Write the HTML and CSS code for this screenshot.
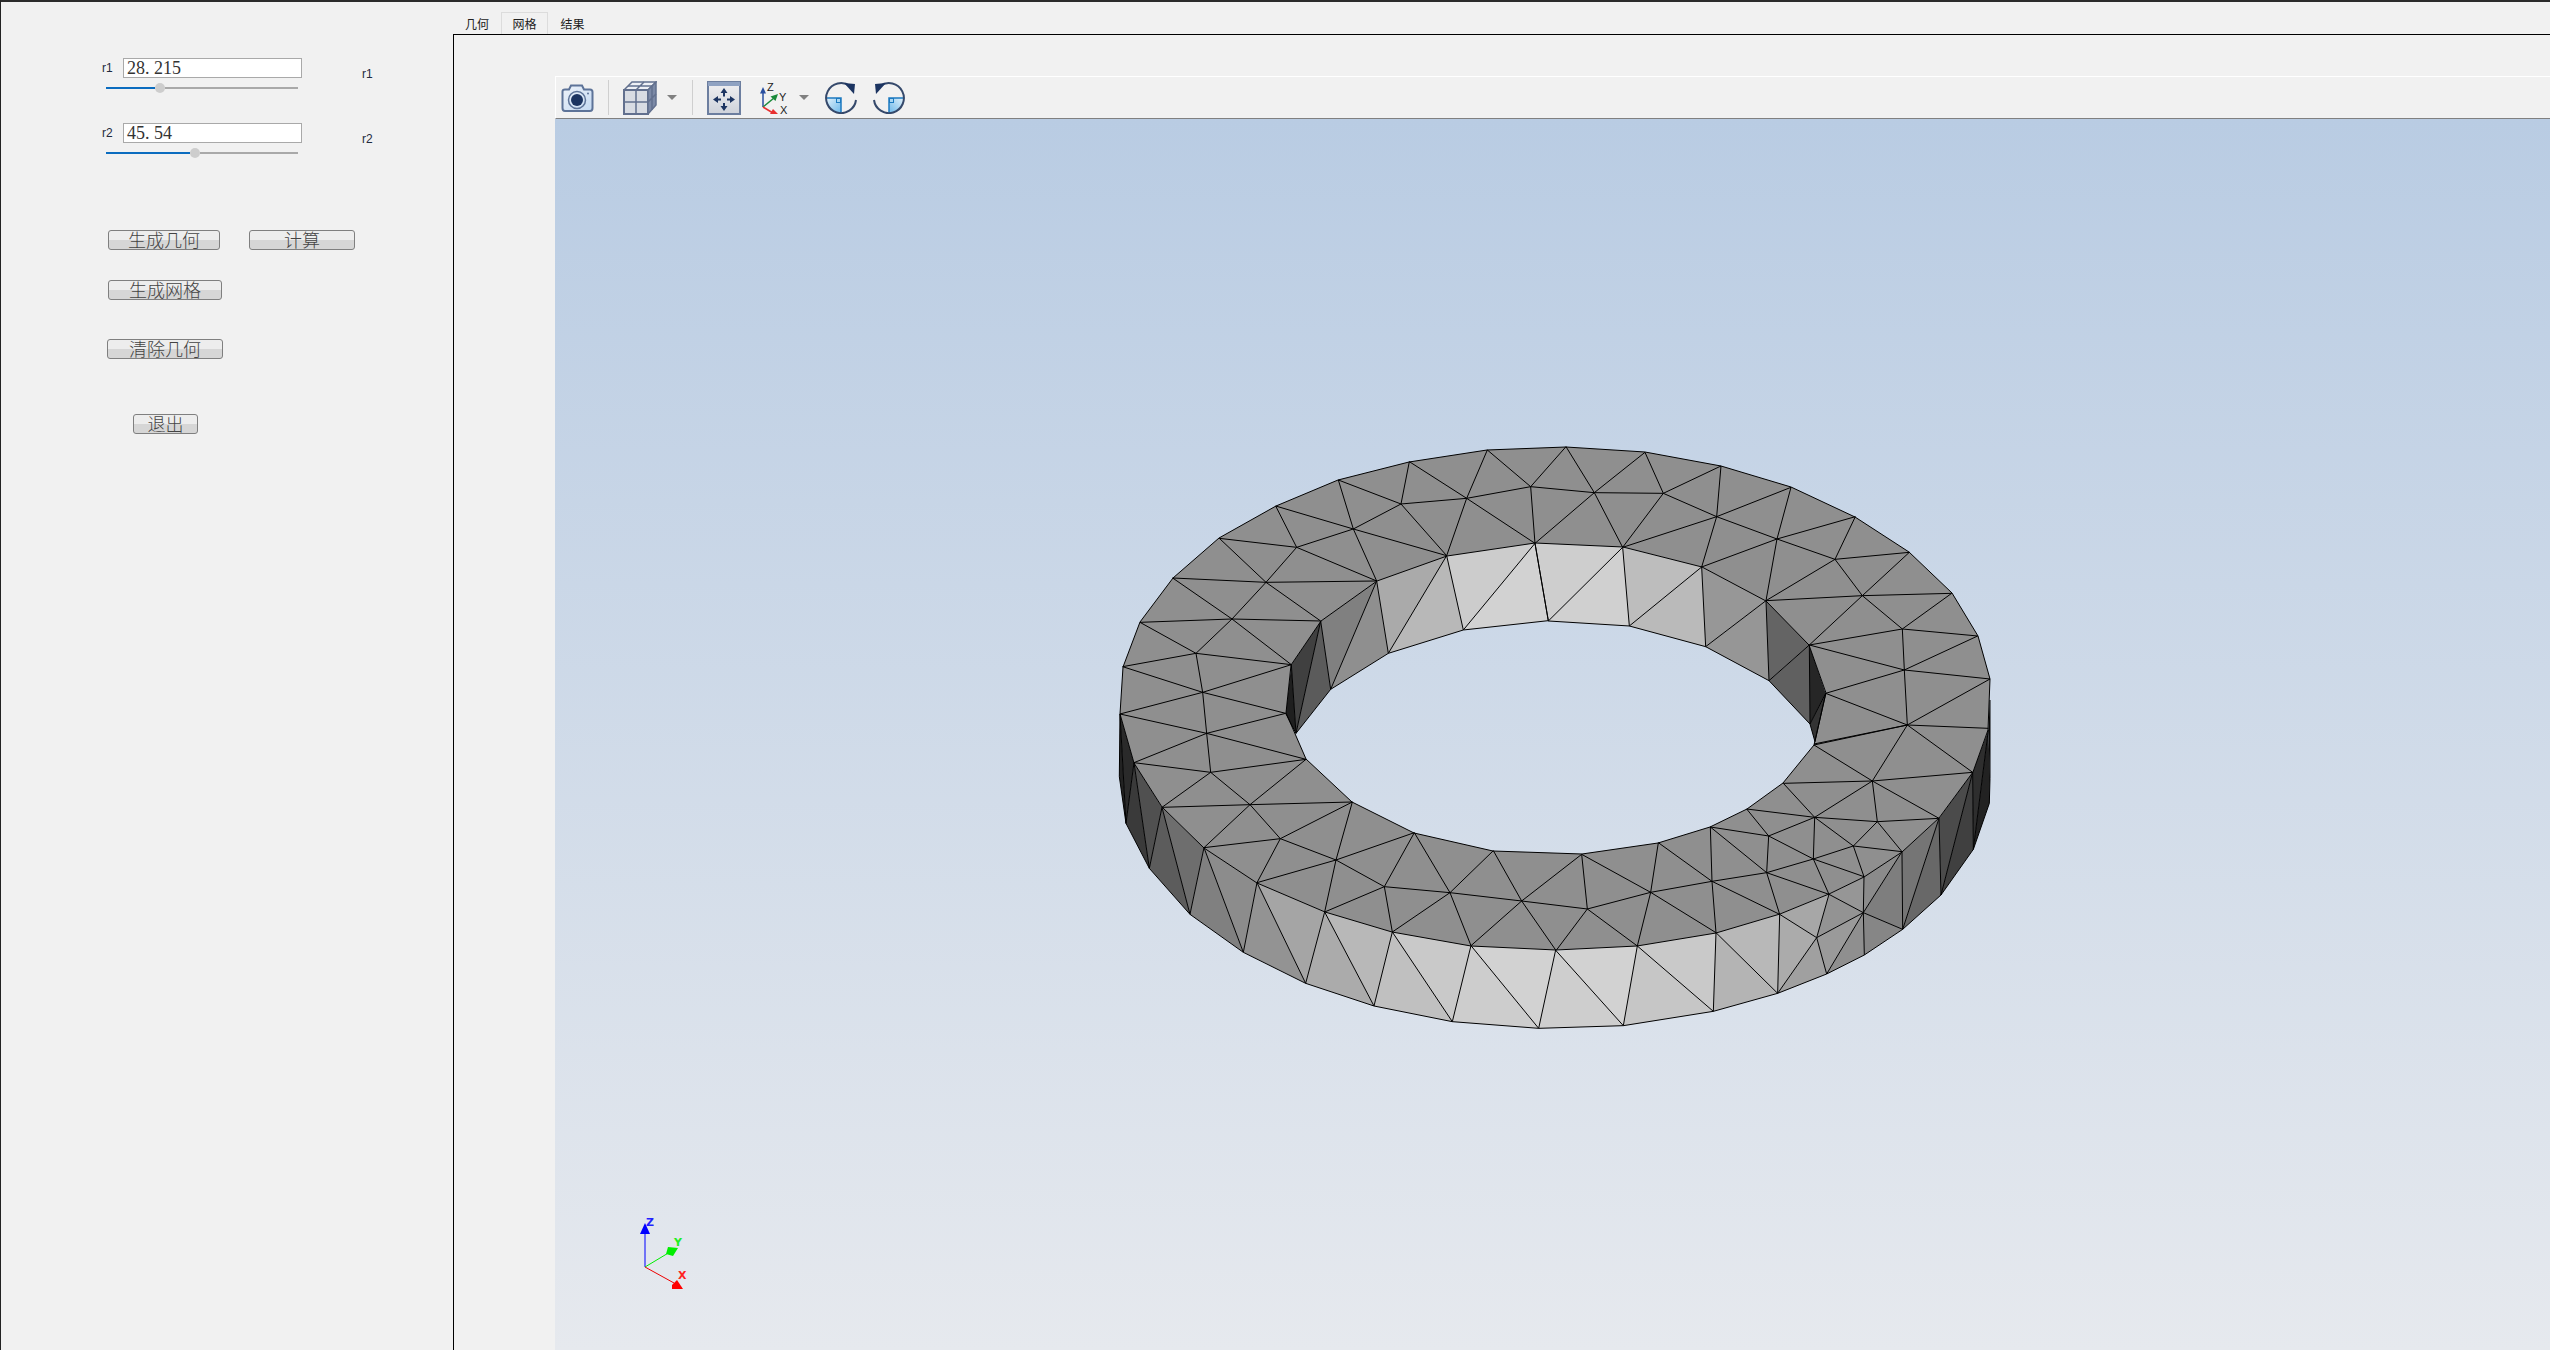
FILE: index.html
```html
<!DOCTYPE html>
<html lang="zh">
<head>
<meta charset="utf-8">
<title>几何 网格 结果</title>
<link rel="stylesheet" href="styles.css">
</head>
<body>
<div class="app">
  <aside class="panel">
    <div class="param">
      <span class="lbl">r1</span>
      <div class="num">28<span class="dot">.</span>215</div>
      <span class="lbl lbl-right">r1</span>
      <div class="slider"><i class="fill" style="width:49px"></i><i class="thumb"></i><i class="rest"></i></div>
    </div>
    <div class="param">
      <span class="lbl">r2</span>
      <div class="num">45<span class="dot">.</span>54</div>
      <span class="lbl lbl-right">r2</span>
      <div class="slider"><i class="fill" style="width:84px"></i><i class="thumb"></i><i class="rest"></i></div>
    </div>
    <div class="row row-a">
      <button class="btn b-geo">生成几何</button>
      <button class="btn b-calc">计算</button>
    </div>
    <div class="row row-b"><button class="btn b-mesh">生成网格</button></div>
    <div class="row row-c"><button class="btn b-clear">清除几何</button></div>
    <div class="row row-d"><button class="btn b-exit">退出</button></div>
  </aside>
  <main class="main">
    <nav class="tabs">
      <span class="tab">几何</span>
      <span class="tab active">网格</span>
      <span class="tab">结果</span>
    </nav>
    <section class="pane">
      <div class="toolbar">
        <svg class="ic ic-cam" viewBox="0 0 34 28">
          <defs>
            <linearGradient id="gCam" x1="0" y1="0" x2="1" y2="1"><stop offset="0" stop-color="#eef3fa"/><stop offset="1" stop-color="#c4d9f2"/></linearGradient>
            <linearGradient id="gFit" x1="0" y1="0" x2="0" y2="1"><stop offset="0" stop-color="#f0f0f2"/><stop offset="1" stop-color="#ced2da"/></linearGradient>
            <linearGradient id="gQ" x1="0" y1="0" x2="1" y2="1"><stop offset="0" stop-color="#e4f2fb"/><stop offset="1" stop-color="#6cb8ea"/></linearGradient>
          </defs>
          <path class="cam-body" d="M2.5 7.5Q2.5 5.5 5 5.5L9 5.5L11 1.5L22 1.5L24 5.5L30 5.5Q32.5 5.5 32.5 8L32.5 24Q32.5 27 30 27L5 27Q2.500 27 2.500 24Z"/>
          <circle class="cam-ring" cx="17" cy="16" r="8.500"/>
          <circle class="navy" cx="17" cy="16" r="6"/>
          <circle class="cam-dot" cx="28" cy="9.500" r="1"/>
        </svg>
        <i class="sep s1"></i>
        <svg class="ic ic-cube" viewBox="0 0 34 34">
          <path class="cube-top" d="M1 9L9 1L33 1L25 9Z"/>
          <path class="cube-front" d="M1 9L25 9L25 33L1 33Z"/>
          <path class="cube-side" d="M25 9L33 1L33 24L25 33Z"/>
          <path class="cube-line" d="M13 9L13 33M1 21L25 21M5 5L29 5M21 1L13 9M29 5L29 29M25 21L33 13"/>
        </svg>
        <i class="caret c1"></i>
        <i class="sep s2"></i>
        <svg class="ic ic-fit" viewBox="0 0 34 34">
          <rect class="fit-box" x="1" y="1" width="32" height="32"/>
          <rect class="fit-bar" x="1" y="1" width="32" height="4"/>
          <path class="fit-arrow" d="M17 10L17 15.500M17 22L17 27M9 18.500L14 18.500M20 18.500L25 18.500"/>
          <path class="navy" d="M17 7L20.500 12L13.500 12ZM17 30L13.500 25L20.500 25ZM6 18.500L11 15L11 22ZM28 18.500L23 22L23 15Z"/>
        </svg>
        <svg class="ic ic-axes" viewBox="0 -2 30 38">
          <path class="ax ax-z" d="M3 26L3 12"/><path class="head-z" d="M3 6L6 12.500L0 12.500Z"/>
          <path class="ax ax-y" d="M3 26L14 17"/><path class="head-y" d="M18 13L15.500 20L10.500 15.500Z"/>
          <path class="ax ax-x" d="M3 26L13 32"/><path class="head-x" d="M18 33L10 33L13 28Z"/>
          <text class="ax-t" x="7" y="10">Z</text><text class="ax-t" x="19" y="20">Y</text><text class="ax-t" x="20" y="33">X</text>
        </svg>
        <i class="caret c2"></i>
        <svg class="ic ic-rot r1" viewBox="0 0 32 32">
          <path class="quarter" d="M1 16L16 16L16 31A15 15 0 0 1 1 16Z"/>
          <rect class="q-box" x="11.500" y="16.500" width="4" height="4"/>
          <path class="q-line" d="M1 16L16 16L16 31"/>
          <path class="rot-arc" d="M31 18A15 15 0 1 1 25 4"/>
          <path class="navy" d="M19 1L30 2L29 12Z"/>
        </svg>
        <svg class="ic ic-rot r2" viewBox="0 0 32 32">
          <path class="quarter" d="M1 16L16 16L16 31A15 15 0 0 1 1 16Z"/>
          <rect class="q-box" x="11.500" y="16.500" width="4" height="4"/>
          <path class="q-line" d="M1 16L16 16L16 31"/>
          <path class="rot-arc" d="M31 18A15 15 0 1 1 25 4"/>
          <path class="navy" d="M19 1L30 2L29 12Z"/>
        </svg>
      </div>
      <div class="view">
        <svg class="scene" viewBox="555 119 1995 1231">
          <g transform="translate(1100 430) scale(.33333)">
            <polygon fill="#d2d2d2" points="1305,340 1345,572 1090,600"/>
            <polygon fill="#cccccc" points="1305,340 1040,377 1090,600"/>
            <polygon fill="#b8b8b8" points="1040,377 865,670 1090,600"/>
            <polygon fill="#aaaaaa" points="1040,377 830,453 865,670"/>
            <polygon fill="#8f8f8f" points="830,453 692,778 865,670"/>
            <polygon fill="#808080" points="830,453 662,573 692,778"/>
            <polygon fill="#5b5b5b" points="662,573 588,910 692,778"/>
            <polygon fill="#404040" points="662,573 574,704 588,910"/>
            <polygon fill="#1f1f1f" points="574,704 557,850 588,910"/>
          </g>
          <g transform="translate(1540 430) scale(.33333)">
            <polygon fill="#cecece" points="-15,340 248,352 25,573"/>
            <polygon fill="#d0d0d0" points="248,352 268,588 25,573"/>
            <polygon fill="#bdbdbd" points="248,352 485,411 268,588"/>
            <polygon fill="#bababa" points="485,411 497,650 268,588"/>
            <polygon fill="#979797" points="485,411 678,512 497,650"/>
            <polygon fill="#969696" points="678,512 687,752 497,650"/>
            <polygon fill="#646464" points="678,512 808,645 687,752"/>
            <polygon fill="#606060" points="808,645 810,882 687,752"/>
            <polygon fill="#262626" points="808,645 857,790 810,882"/>
            <polygon fill="#333333" points="857,790 825,935 810,882"/>
          </g>
          <g transform="translate(1100 720) scale(.33333)">
            <polygon fill="#222222" points="60,-18 78,310 58,170"/>
            <polygon fill="#2a2a2a" points="60,-18 102,128 78,310"/>
            <polygon fill="#3a3a3a" points="102,128 148,445 78,310"/>
            <polygon fill="#505050" points="102,128 186,262 148,445"/>
            <polygon fill="#5c5c5c" points="186,262 270,583 148,445"/>
            <polygon fill="#6e6e6e" points="186,262 312,383 270,583"/>
            <polygon fill="#808080" points="312,383 430,697 270,583"/>
            <polygon fill="#8c8c8c" points="312,383 471,488 430,697"/>
            <polygon fill="#939393" points="471,488 617,790 430,697"/>
            <polygon fill="#a5a5a5" points="471,488 674,576 617,790"/>
            <polygon fill="#ababab" points="674,576 822,858 617,790"/>
            <polygon fill="#b8b8b8" points="674,576 877,636 822,858"/>
            <polygon fill="#c0c0c0" points="877,636 1057,905 822,858"/>
            <polygon fill="#c9c9c9" points="877,636 1113,677 1057,905"/>
            <polygon fill="#cdcdcd" points="1113,677 1316,925 1057,905"/>
            <polygon fill="#d2d2d2" points="1113,677 1367,690 1316,925"/>
          </g>
          <g transform="translate(1540 720) scale(.33333)">
            <polygon fill="#cecece" points="48,692 250,917 -4,925"/>
            <polygon fill="#d2d2d2" points="48,692 292,678 250,917"/>
            <polygon fill="#c6c6c6" points="292,678 520,874 250,917"/>
            <polygon fill="#c9c9c9" points="292,678 528,638 520,874"/>
            <polygon fill="#b4b4b4" points="528,638 713,820 520,874"/>
            <polygon fill="#b8b8b8" points="528,638 719,583 713,820"/>
            <polygon fill="#ababab" points="719,583 830,653 713,820"/>
            <polygon fill="#a7a7a7" points="719,583 867,523 830,653"/>
            <polygon fill="#a0a0a0" points="830,653 860,762 713,820"/>
            <polygon fill="#939393" points="867,523 970,578 830,653"/>
            <polygon fill="#9a9a9a" points="970,578 860,762 830,653"/>
            <polygon fill="#8f8f8f" points="970,578 973,705 860,762"/>
            <polygon fill="#969696" points="867,523 972,470 970,578"/>
            <polygon fill="#8b8b8b" points="972,470 1086,395 970,578"/>
            <polygon fill="#868686" points="970,578 1088,628 973,705"/>
            <polygon fill="#7e7e7e" points="970,578 1086,395 1088,628"/>
            <polygon fill="#757575" points="1086,395 1197,295 1088,628"/>
            <polygon fill="#686868" points="1197,295 1203,525 1088,628"/>
            <polygon fill="#4b4b4b" points="1197,295 1298,157 1203,525"/>
            <polygon fill="#404040" points="1298,157 1300,388 1203,525"/>
            <polygon fill="#2e2e2e" points="1298,157 1345,30 1300,388"/>
            <polygon fill="#222222" points="1345,30 1350,175 1348,250 1300,388"/>
            <polygon fill="#111111" points="1345,30 1350,-60 1350,175"/>
          </g>
          <path class="top-face" fill-rule="evenodd" d="M1566 447L1487 450L1409 462L1338 480L1276 506L1219 538L1173 578L1140 622L1123 667L1120 714L1134 763L1162 807L1204 848L1257 883L1325 912L1392 932L1471 946L1556 950L1637 946L1716 933L1780 914L1829 894L1864 877L1902 852L1939 818L1973 772L1988 730L1990 679L1978 636L1952 593L1909 552L1855 517L1791 487L1721 466L1645 452ZM1535 543L1447 556L1377 581L1321 621L1291 665L1286 713L1306 759L1352 802L1414 833L1493 851L1582 854L1658 843L1710 827L1747 809L1783 783L1814 745L1826 693L1809 645L1766 601L1702 567L1623 547Z"/>
          <g transform="translate(1100 430) scale(.33333)">
            <path class="edge" d="M1162 60L1100 205M1162 60L1292 170M1398 50L1292 170M928 95L903 222M928 95L1100 205M715 150L903 222M715 150L760 297M527 228L760 297M527 228L590 352M358 325L590 352M358 325L498 457M218 444L498 457M218 444L396 567M120 577L396 567M120 577L288 670M68 710L288 670M68 710L308 787M60 852L308 787M60 852L320 910M1292 170L1100 205M1100 205L903 222M1292 170L1305 340M1100 205L1305 340M1100 205L1040 377M903 222L1040 377M903 222L760 297M760 297L1040 377M760 297L830 453M760 297L590 352M590 352L830 453M590 352L498 457M498 457L830 453M498 457L662 573M498 457L396 567M396 567L662 573M396 567L574 704M396 567L288 670M288 670L574 704M288 670L308 787M308 787L574 704M308 787L557 850M308 787L320 910M320 910L557 850"/>
            <path class="edge" d="M1305 340L1090 600M1305 340L1345 572M1040 377L1090 600M1040 377L865 670M830 453L865 670M830 453L692 778M662 573L692 778M662 573L588 910M574 704L588 910M557 850L588 910M1345 572L1090 600L865 670L692 778L588 910"/>
          </g>
          <g transform="translate(1540 430) scale(.33333)">
            <path class="edge" d="M78 50L163 188M315 67L163 188M315 67L370 190M543 108L370 190M543 108L530 260M753 172L530 260M753 172L711 327M946 260L711 327M946 260L885 388M1108 367L885 388M1108 367L967 497M1235 490L967 497M1235 490L1087 597M1313 618L1087 597M1313 618L1093 720M1350 747L1093 720M1350 747L1102 885M1345 895L1102 885M163 188L-28 170M163 188L-15 340M163 188L248 352M163 188L370 190M370 190L248 352M370 190L530 260M530 260L248 352M530 260L485 411M530 260L711 327M711 327L485 411M711 327L678 512M711 327L885 388M885 388L678 512M885 388L967 497M967 497L678 512M967 497L808 645M967 497L1087 597M1087 597L808 645M1087 597L1093 720M1093 720L808 645M1093 720L857 790M1093 720L1102 885M1102 885L857 790M1102 885L822 942"/>
            <path class="edge" d="M-15 340L25 573M248 352L25 573M248 352L268 588M485 411L268 588M485 411L497 650M678 512L497 650M678 512L687 752M808 645L687 752M808 645L810 882M857 790L810 882M857 790L825 935M25 573L268 588L497 650L687 752L810 882L825 935"/>
          </g>
          <g transform="translate(1100 720) scale(.33333)">
            <path class="edge" d="M320 40L618 118M320 40L102 128M320 40L332 157M332 157L102 128M332 157L618 118M332 157L186 262M332 157L450 254M186 262L450 254M450 254L618 118M450 254L757 246M450 254L312 383M450 254L541 356M312 383L541 356M541 356L757 246M541 356L471 488M541 356L708 420M708 420L757 246M708 420L471 488M708 420L674 576M708 420L853 500M708 420L943 338M853 500L943 338M853 500L674 576M853 500L877 636M853 500L1050 518M943 338L1050 518M1050 518L877 636M1050 518L1113 677M1050 518L1180 392M1050 518L1265 543M1180 392L1265 543M1265 543L1113 677M1265 543L1367 690M1265 543L1445 403M1265 543L1462 567"/>
            <path class="edge" d="M102 128L148 445M102 128L78 310M60 -18L78 310M186 262L148 445M186 262L270 583M312 383L270 583M312 383L430 697M471 488L430 697M471 488L617 790M674 576L617 790M674 576L822 858M877 636L822 858M877 636L1057 905M1113 677L1057 905M1113 677L1316 925M1367 690L1316 925M60 -18L58 170L78 310L148 445L270 583L430 697L617 790L822 858L1057 905L1316 925L1570 917"/>
          </g>
          <g transform="translate(1540 720) scale(.33333)">
            <path class="edge" d="M125 403L142 567M125 403L332 517M355 368L332 517M355 368L516 484M142 567L332 517M142 567L48 692M142 567L292 678M332 517L292 678M332 517L528 638M332 517L516 484M516 484L511 321M516 484L528 638M516 484L719 583M516 484L680 458M511 321L680 458M511 321L686 348M620 267L686 348M620 267L824 292M686 348L824 292M686 348L820 417M686 348L680 458M680 458L820 417M680 458L719 583M680 458L867 523M820 417L867 523M820 417L972 470M820 417L940 378M820 417L824 292M824 292L940 378M824 292L730 190M824 292L997 183M824 292L1012 305M940 378L1012 305M940 378L972 470M940 378L1086 395M1012 305L1086 395M1012 305L1197 295M1012 305L997 183M997 183L730 190M997 183L822 75M997 183L1102 15M997 183L1298 157M997 183L1197 295M1102 15L822 75M1102 15L1298 157"/>
            <path class="edge" d="M48 692L250 917M292 678L250 917M292 678L520 874M528 638L520 874M528 638L713 820M719 583L713 820M719 583L830 653M830 653L713 820M830 653L860 762M830 653L867 523M830 653L970 578M867 523L970 578M970 578L860 762M970 578L973 705M970 578L972 470M970 578L1086 395M970 578L1088 628M1086 395L1088 628M1197 295L1088 628M1197 295L1203 525M1298 157L1203 525M1298 157L1300 388M1345 30L1300 388M250 917L520 874L713 820L860 762L973 705L1088 628L1203 525L1300 388L1348 250L1350 175L1350 -60"/>
          </g>
          <path class="edge" d="M1566 447L1487 450L1409 462L1338 480L1276 506L1219 538L1173 578L1140 622L1123 667L1120 714L1134 763L1162 807L1204 848L1257 883L1325 912L1392 932L1471 946L1556 950L1637 946L1716 933L1780 914L1829 894L1864 877L1902 852L1939 818L1973 772L1988 730L1990 679L1978 636L1952 593L1909 552L1855 517L1791 487L1721 466L1645 452ZM1535 543L1447 556L1377 581L1321 621L1291 665L1286 713L1306 759L1352 802L1414 833L1493 851L1582 854L1658 843L1710 827L1747 809L1783 783L1814 745L1826 693L1809 645L1766 601L1702 567L1623 547Z"/>
          <path class="tri-z" d="M645 1267L645 1230"/>
          <path class="tri-zh" d="M645 1223L650 1234L640 1234Z"/>
          <path class="tri-y" d="M645 1267L670 1252"/>
          <path class="tri-yh" d="M668 1247L678 1248L673 1256L666 1254Z"/>
          <path class="tri-x" d="M645 1267L674 1283"/>
          <path class="tri-xh" d="M677 1280L683 1289L672 1289L672 1285Z"/>
          <text class="tri-t tz" x="646" y="1226">Z</text>
          <text class="tri-t ty" x="674" y="1246">Y</text>
          <text class="tri-t tx" x="678" y="1279">X</text>
        </svg>
      </div>
    </section>
  </main>
</div>
</body>
</html>
```

FILE: styles.css
```css
* { box-sizing: border-box; }
html, body { margin: 0; height: 100%; }
body { overflow: hidden; background: #f1f1f1; font-family: "Liberation Sans", "Noto Sans CJK SC", sans-serif; }

.app { display: flex; width: 2550px; height: 1350px; border-top: 2px solid #2b2b2b; border-left: 1px solid #222; background: #f1f1f1; }

/* left control panel */
.panel { width: 452px; flex: none; padding: 56px 0 0 102px; }
.param { display: grid; grid-template-columns: 20px 179px 61px auto; grid-template-rows: 20px 10px; row-gap: 5px; width: 320px; height: 65px; justify-content: start; }
.lbl { font-size: 12px; line-height: 14px; color: #1e2a3e; align-self: center; margin-left: -1px; }
.lbl-right { grid-column: 4; align-self: start; margin-top: 9px; }
.num { width: 179px; height: 20px; padding: 0 0 0 3px; border: 1px solid #a9a9a9; background: #fff; color: #333; font: 18px/18px "Liberation Serif", serif; white-space: nowrap; }
.dot { padding-right: 4.5px; }
.slider { grid-column: 1 / span 2; grid-row: 2; margin-left: 3px; width: 192px; height: 10px; display: flex; align-items: center; }
.slider i { display: block; height: 2px; }
.fill { background: #0b6cbf; flex: none; }
.rest { background: #a9a9a9; flex: 1; }
.slider .thumb { width: 10px; height: 10px; border-radius: 50%; background: #cdcdcd; flex: none; }

.row { display: flex; }
.row-a { margin: 42px 0 0 5px; gap: 29px; }
.row-b { margin: 30px 0 0 5px; }
.row-c { margin: 39px 0 0 4px; }
.row-d { margin: 55px 0 0 30px; }
.btn { height: 20px; padding: 0 0 2px; border: 1px solid #7f7f7f; border-radius: 3px; background: linear-gradient(#ededed 50%, #d6d6d6 50%); color: #444; font: 300 18px/16px "Noto Sans CJK SC", sans-serif; display: flex; align-items: center; justify-content: center; }
.b-geo { width: 112px; }
.b-calc { width: 106px; }
.b-mesh { width: 114px; }
.b-clear { width: 116px; }
.b-exit { width: 65px; }

/* tabs */
.main { flex: 1; min-width: 0; display: flex; flex-direction: column; }
.tabs { height: 32px; display: flex; align-items: flex-end; flex: none; }
.tab { width: 48px; height: 22px; padding-top: 1px; display: flex; align-items: center; justify-content: center; font: 12px/14px "Noto Sans CJK SC", sans-serif; color: #222; }
.tab.active { width: 47px; border: 1px solid #dcdcdc; border-bottom: 0; }
.tab.active + .tab { width: 49px; }

/* tab pane */
.pane { flex: 1; min-height: 0; border-top: 1px solid #000; border-left: 1px solid #000; padding: 41px 0 0 101px; display: flex; flex-direction: column; }
.toolbar { height: 43px; flex: none; display: flex; align-items: center; padding-left: 4px; border-top: 1px solid #fff; border-left: 1px solid #fff; border-bottom: 1px solid #808080; background: #f1f1f1; }
.ic { display: block; flex: none; }
.ic-cam { width: 34px; height: 28px; }
.ic-cube { width: 34px; height: 34px; margin-left: 14px; }
.ic-fit { width: 34px; height: 34px; margin-left: 14px; }
.ic-axes { width: 30px; height: 38px; margin-left: 19px; }
.ic-rot { width: 32px; height: 32px; }
.r1 { margin-left: 16px; }
.r2 { margin-left: 16px; transform: scaleX(-1); }
.sep { display: block; width: 1px; height: 35px; background: #cfcfcf; flex: none; }
.s1 { margin-left: 14px; }
.s2 { margin-left: 15px; }
.caret { display: block; width: 0; height: 0; flex: none; border-left: 5px solid transparent; border-right: 5px solid transparent; border-top: 5px solid #808080; }
.c1 { margin-left: 10px; }
.c2 { margin-left: 9px; }

.navy { fill: #1c3461; }
.cam-body { fill: url(#gCam); stroke: #5d7398; stroke-width: 2; }
.cam-ring { fill: none; stroke: #5d7398; stroke-width: 1.5; }
.cam-dot { fill: #5d7398; }
.cube-top { fill: #eef0f5; stroke: #62708e; stroke-width: 1.5; }
.cube-front { fill: #d8dce3; stroke: #62708e; stroke-width: 2; }
.cube-side { fill: #7b89a6; stroke: #62708e; stroke-width: 1.5; }
.cube-line { fill: none; stroke: #62708e; stroke-width: 1.5; }
.fit-box { fill: url(#gFit); stroke: #6c7e9f; stroke-width: 2; }
.fit-bar { fill: #8fa2c2; }
.fit-arrow { fill: none; stroke: #1c3461; stroke-width: 2; }
.ax { fill: none; stroke-width: 1.5; }
.ax-z { stroke: #2a4fa0; }
.ax-y { stroke: #1a8a3a; }
.ax-x { stroke: #e83030; }
.head-z { fill: #2a4fa0; }
.head-y { fill: #1a8a3a; }
.head-x { fill: #e83030; }
.ax-t { font: 11px "Liberation Sans", sans-serif; fill: #222; }
.quarter { fill: url(#gQ); }
.q-box { fill: #a9d6f3; stroke: #1c7ac0; stroke-width: 1; }
.q-line { fill: none; stroke: #1c7ac0; stroke-width: 1.5; }
.rot-arc { fill: none; stroke: #35496b; stroke-width: 2; }

/* 3D viewport */
.view { flex: 1; min-height: 0; background: linear-gradient(#b9cce3, #e6e9ee); }
.scene { display: block; width: 100%; height: 100%; }
.top-face { fill: #8f8f8f; }
.edge { fill: none; stroke: #000; stroke-width: 1; vector-effect: non-scaling-stroke; stroke-linejoin: round; }
.tri-z { stroke: #0000ff; stroke-width: 1; fill: none; }
.tri-y { stroke: #00ee00; stroke-width: 1; fill: none; }
.tri-x { stroke: #ee0000; stroke-width: 1; fill: none; }
.tri-zh { fill: #0000ff; }
.tri-yh { fill: #00ee00; }
.tri-xh { fill: #ff0000; }
.tri-t { font: bold 11px "DejaVu Sans", sans-serif; }
.tz { fill: #2222ff; }
.ty { fill: #22ee22; }
.tx { fill: #ff2222; }
```
